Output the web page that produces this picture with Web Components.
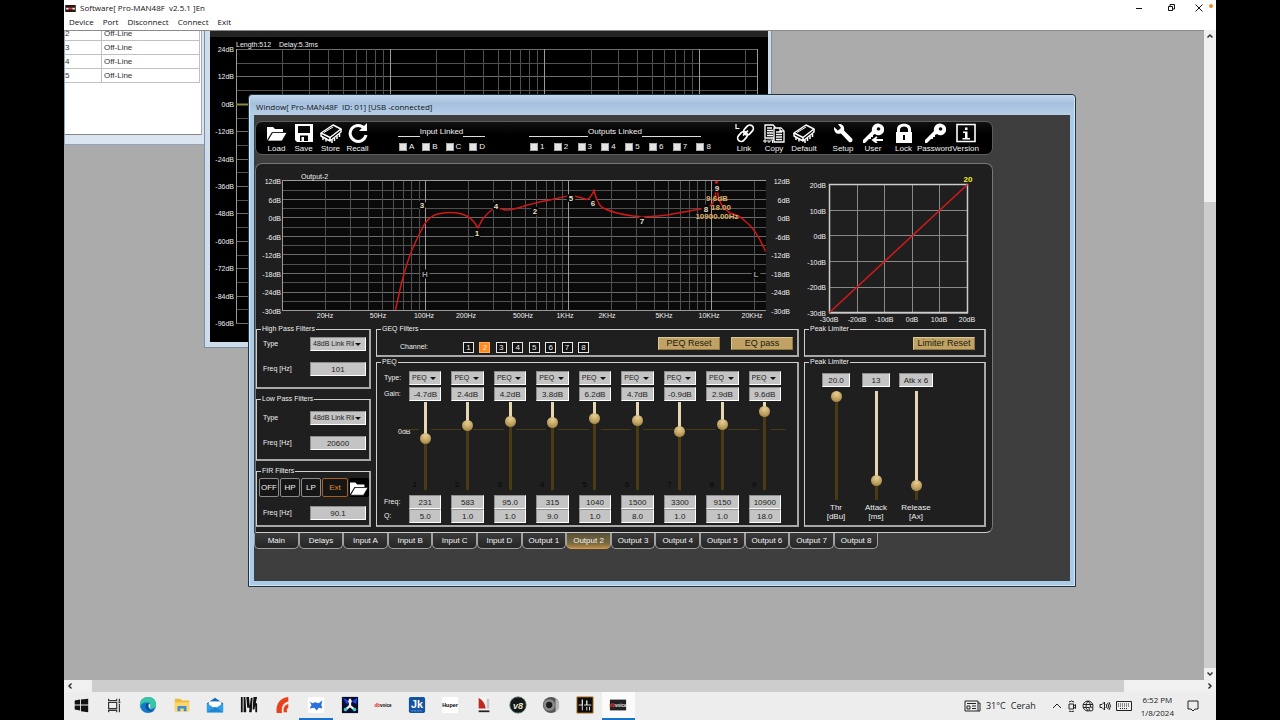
<!DOCTYPE html>
<html lang="en">
<head>
<meta charset="utf-8">
<title>Software[ Pro-MAN48F v2.5.1 ]En</title>
<style>
  html, body { margin: 0; height: 100%; background: #000; }
  body { font-family: "Liberation Sans", Arial, sans-serif; font-size: 8px; line-height: 10px; }
</style>
</head>
<body>
<pro-app></pro-app>
<script>
const define = (name, render, css) => customElements.define(name, class extends HTMLElement {
  connectedCallback() {
    if (this.shadowRoot) return;
    this.attachShadow({ mode: 'open' }).innerHTML =
      `<style>*{box-sizing:border-box}button,input,select{font:inherit;color:inherit;margin:0;padding:0;border:0;border-radius:0;background:none}${css}</style>${render(this)}`;
  }
});
const attr = (el, name, fallback = '') => el.getAttribute(name) ?? fallback;

/* ---------- icons ---------- */
const FOLDER = '<path d="M1 17V4h6l2 2h8v3H6z" fill="#fff"/><path d="M6.5 9.5H21L16 18H1.5z" fill="#fff" stroke="#000" stroke-width=".7"/>';
const CHIP = '<g fill="none" stroke="#fff" stroke-width="1.5" stroke-linejoin="round"><path d="M1 10L13 2l8 4-11 8.5z"/><path d="M1 10v3l9 5 11-9V6M10 14.5V18" /><path d="M4 9.5l9-5.5" stroke-width="1"/><path d="M3 14v3M6 15.5v3M12 17v3M14.5 15v3M17 13v3M19.5 11v3"/></g>';
const KEY = '<path fill="#fff" fill-rule="evenodd" d="M11 3a6 6 0 0 1 9-1 5.5 5.5 0 0 1-7 9l-2 1v2H9v2H7l-4 4H1v-3l9-9a6 6 0 0 1 1-5zm5.5 1.2a1.7 1.7 0 1 0 .1 0z"/>';
const ICONS = {
  load: FOLDER, store: CHIP, default: CHIP,
  save: '<path fill="#fff" fill-rule="evenodd" d="M2 1h18v18H4l-2-2zM5 3v7h12V3zM7 12.5V18h8v-5.5zM8.5 14H11v4H8.5z"/>',
  recall: '<path d="M17.5 5.5A8 8 0 1 0 19 12" fill="none" stroke="#fff" stroke-width="3"/><path d="M12 8h8V0z" fill="#fff"/>',
  link: '<g fill="none" stroke="#fff" stroke-width="1.7"><rect x="10" y="3.5" width="11" height="7" rx="3.5" transform="rotate(-48 15.5 7)"/><rect x="4" y="10" width="11" height="7" rx="3.5" transform="rotate(-48 9.5 13.5)"/><path d="M10 12.500l5-5"/><path d="M3 1v4.500H6.500" stroke-width="1.2"/></g>',
  copy: '<g fill="#000" stroke="#fff" stroke-width="1.3"><path d="M2 2h8l2 2v11H2z"/><path d="M4 5h5M4 7.5h6M4 10h6M4 12.5h6"/><path d="M11 5h7l3 3v11H11z"/><path d="M13 9h6M13 11.5h6M13 14h6M13 16.5h6M17 5v3h4"/><path d="M1 17h2v2H1zM5 16.5V19h2v-2.5M8 17h3M9.5 17v3" stroke-width="1"/></g>',
  setup: '<path fill="#fff" d="M2 4l4 3.5L9 5 6 1c4-.5 7 2 6 6.5l8 8c1.5 2-.8 4.800-3 3.500l-8-8.500C4.500 12 1.500 8.500 2 4z"/>',
  user: KEY + '<path d="M11 17h10M15 14l-4 3 4 3" fill="none" stroke="#fff" stroke-width="1.8"/>',
  password: KEY,
  lock: '<path fill="#fff" fill-rule="evenodd" d="M4 9V6c0-7 14-7 14 0v3h1v11H3V9zm3 0h8V6.5c0-4-8-4-8 0zm3 3v5h2v-5z"/>',
  version: '<path d="M2 1.5h18v17H2z" fill="none" stroke="#fff" stroke-width="1.6"/><path d="M10 4.5h2.5V7H10zM8 8.5h4.500V15H15v1.500H7.500V15H10v-5H8z" fill="#fff"/>'
};

define('tool-button', el => `<button type="button"><svg viewBox="0 0 22 20" aria-hidden="true">${ICONS[attr(el, 'icon')]}</svg><span><slot></slot></span></button>`, `
  :host{display:block;width:var(--tool-width,30px)}
  button{display:flex;flex-direction:column;align-items:center;gap:1px;width:100%;color:#f2f2f2;white-space:nowrap}
  svg{display:block;width:22px;height:20px}`);

define('link-group', el => `<fieldset><legend>${attr(el, 'caption')}</legend>
  <div class="row">${attr(el, 'items').split(' ').map(i => `<label><input type="checkbox">${i}</label>`).join('')}</div></fieldset>`, `
  :host{display:block;color:#f2f2f2}
  fieldset{border:0;margin:0;padding:0;min-width:0}
  legend{display:flex;width:var(--line-width,100%);padding:0;line-height:10px;font-size:8px;white-space:nowrap}
  legend::before,legend::after{content:"";flex:1;border-bottom:1px solid #ddd;height:9px}
  .row{display:flex;justify-content:space-between;padding:5px 0 0 1px}
  label{display:flex;align-items:center;gap:2px}
  input{appearance:none;width:8px;height:8px;background:#e4e4e4;border:1px solid #aaa}`);

/* ---------- fields ---------- */
define('group-box', el => `<fieldset><legend>${attr(el, 'caption')}</legend><slot></slot></fieldset>`, `
  :host{display:block;min-width:0;color:#eee}
  fieldset{height:100%;margin:0;padding:0;min-width:0;border:1px solid #d0d0d0;border-right:2px solid #a8a8a8;border-bottom:2px solid #a8a8a8}
  legend{margin-left:4px;padding:0 1px;font-size:7px;line-height:10px}`);

define('pick-list', el => `<select aria-label="${attr(el, 'label')}"><option>${attr(el, 'value')}</option></select>`, `
  :host{display:block;position:relative;height:14px;background:#c4c4c4;border:1px solid #eee;border-color:#8d8d8d #fff #fff #8d8d8d;color:#222}
  :host::after{content:"";position:absolute;right:4px;top:5px;border:3px solid transparent;border-top-color:#111;border-bottom:0;pointer-events:none}
  select{appearance:none;display:block;width:100%;height:12px;padding:0 11px 1px 2px;font-size:7px;overflow:hidden}`);

define('value-box', el => `<input type="text" aria-label="${attr(el, 'label')}" value="${attr(el, 'value')}">`, `
  :host{display:block;height:14px;background:#c4c4c4;border:1px solid #fff;border-color:#8d8d8d #fff #fff #8d8d8d;color:#222}
  input{display:block;width:100%;height:12px;text-align:center;font-size:8px}`);

define('filter-fields', el => `
  ${el.hasAttribute('type') ? `<span>Type</span><pick-list label="${attr(el, 'name')} type" value="${attr(el, 'type')}"></pick-list>` : ''}
  <span>Freq [Hz]</span><value-box label="${attr(el, 'name')} frequency" value="${attr(el, 'freq')}"></value-box>`, `
  :host{display:grid;grid-template-columns:47px 56px;align-items:center;row-gap:11px;padding:var(--top,3px) 0 0 6px;font-size:7px}`);

define('gold-button', () => `<button type="button"><slot></slot></button>`, `
  :host{display:block;width:62px}
  button{width:100%;height:13px;background:#bfa264;border:1px solid #d9c796;border-color:#d9c796 #8d7642 #8d7642 #d9c796;color:#1d1a10;font-size:9px;line-height:11px;white-space:nowrap}`);

define('level-fader', el => {
  const min = +attr(el, 'min', 0), max = +attr(el, 'max', 100), v = +attr(el, 'value');
  const p = 100 - (v - min) / (max - min) * 100;
  return `<input type="range" step="any" aria-label="${attr(el, 'label')}" min="${min}" max="${max}" value="${v}" style="--p:${p}%">`;
}, `
  :host{display:block;width:11px}
  input{appearance:none;display:block;writing-mode:vertical-lr;direction:rtl;width:11px;height:100%;
    background:linear-gradient(#e6d6b2 var(--p),#4b3b12 var(--p)) center/3px 100% no-repeat}
  input::-webkit-slider-runnable-track{width:11px;height:100%;background:none}
  input::-webkit-slider-thumb{appearance:none;width:11px;height:11px;border-radius:50%;background:radial-gradient(circle at 50% 25%,#e4cf97,#c4a562 50%,#8d733a)}`);

define('band-strip', el => {
  const n = attr(el, 'n'), g = attr(el, 'gain');
  return `<pick-list label="Band ${n} type" value="PEQ"></pick-list>
  <value-box class="gain" label="Band ${n} gain" value="${g}dB"></value-box>
  <div class="lane"><span class="n">${n}</span><level-fader label="Band ${n} gain" min="-30" max="12" value="${g}"></level-fader><span class="n"></span></div>
  <value-box label="Band ${n} frequency" value="${attr(el, 'freq')}"></value-box>
  <value-box label="Band ${n} Q" value="${attr(el, 'q')}"></value-box>`;
}, `
  :host{display:flex;flex-direction:column;min-width:0}
  pick-list,value-box{margin:0 5px}
  .gain{margin-top:2px}
  .lane{display:flex;justify-content:center;height:88px;margin:1px 0 5px;
    background:linear-gradient(90deg,#4b3b12 15px,#0000 15px 27px,#4b3b12 27px) 0 27px/100% 1px no-repeat}
  .lane .n{width:10px;color:#050505;align-self:flex-end;text-align:center}`);

define('limit-strip', el => `
  <value-box label="${attr(el, 'caption')}" value="${attr(el, 'text')}"></value-box>
  <level-fader label="${attr(el, 'caption')}" value="${attr(el, 'value')}"></level-fader>
  <span>${attr(el, 'caption')}<br>${attr(el, 'unit')}</span>`, `
  :host{display:flex;flex-direction:column;align-items:center;text-align:center;line-height:9px;font-size:8px}
  value-box{width:var(--box-width,28px)}
  level-fader{height:109px;margin:4px 0 3px}`);

/* ---------- graphs ---------- */
const logLines = (x0, decade, x1, y0, y1) => {
  let s = '';
  for (let d = 0; d < 4; d++) for (let k = 1; k < 10; k++) {
    const x = Math.round(x0 + decade * (d + Math.log10(k)));
    if (x < x1) s += `<path class="${k === 1 ? 'major' : ''}" d="M${x}.5 ${y0}V${y1}"/>`;
  }
  return s;
};
const rows = (n, y0, step, x0, x1) => Array.from({ length: n }, (_, i) => `<path class="${i % 2 ? '' : 'mid'}" d="M${x0} ${Math.round(y0 + i * step)}.5H${x1}"/>`).join('');
const text = (x, y, s, cls = '') => `<text class="${cls}" x="${x}" y="${y}">${s}</text>`;
const SVG_CSS = `svg{display:block;width:100%;height:auto}path{fill:none;stroke:#505050}.mid{stroke:#6c6c6c}.major{stroke:#9a9a9a}
  text{font-size:7px;fill:#eee}.end{text-anchor:end}.c{text-anchor:middle}`;

define('fir-graph', () => `<svg viewBox="210 30 558 312" role="img" aria-label="FIR response">
  <rect x="210" y="30" width="558" height="312" fill="#000"/><rect x="210" y="30" width="558" height="7" fill="#232323"/>
  ${rows(21, 49, 13.7, 236, 757)}${logLines(235.5, 154.4, 757, 49, 323)}<path class="major" d="M757.5 49V323"/>
  <path d="M236 104.5H757" style="stroke:#8c8a3c;stroke-width:2"/>
  ${text(236, 47, 'Length:512')}${text(279, 47, 'Delay:5.3ms')}
  ${[24, 12, 0, -12, -24, -36, -48, -60, -72, -84, -96].map((v, i) => text(234, Math.round(52 + i * 27.4), v + 'dB', 'end')).join('')}
</svg>`, `:host{display:block}${SVG_CSS} text.end{font-size:7px}`);

define('eq-graph', () => {
  const marks = [['3', 422, 205], ['1', 477, 233], ['4', 496, 206], ['2', 535, 211], ['5', 571, 198], ['6', 593, 203], ['7', 642, 221], ['8', 706, 209], ['9', 717, 188], ['H', 425, 274, 1], ['L', 756, 274, 1]];
  return `<svg viewBox="256 164 544 160" role="img" aria-label="Output-2 response">
  <rect x="282" y="180" width="484" height="131" fill="#0a0a0a"/>
  ${rows(15, 180.3, 9.27, 282, 766)}${logLines(282, 143.1, 766, 180, 311)}
  <path class="major" d="M282 180.5H766M282 310.5H766"/>
  <path style="stroke:#d01818;stroke-width:1.5" d="M395.5 310L401 285Q407 262 412 250 417 238 424 225 429 217 436 214.5 446 211.5 457 213 469 215 474 222L478 228 482 220Q487 213 493 209 499 207 505 210 512 210 520 207.5 533 203 550 200 563 197 571 195.5 580 197 587 199.5 590 199 594 190.5 597 203 602 207.5 612 213 633 216 647 218 667 215 690 211 706 208 714 206 715.5 195L716.5 182 718 195Q720 207 730 213 739 215 745 221 756 229 765.5 251.5"/>
  ${marks.map(([t, x, y, dim]) => `<circle cx="${x}" cy="${y}" r="4.5" fill="#080808"/>${text(x, y + 3, t, dim ? 'c dim' : 'c mark')}`).join('')}
  <circle cx="716.5" cy="182" r="1.5" fill="#e01818"/>
  ${text(717, 201, '9.6dB', 'c gold')}${text(721, 210, '18.00', 'c gold')}${text(717, 219, '10900.00Hz', 'c gold')}
  ${text(301, 179, 'Output-2', 'name')}
  ${[12, 6, 0, -6, -12, -18, -24, -30].map((v, i) => { const y = Math.round(184 + i * 18.5); return text(281, y, v + 'dB', 'end') + text(790, y, v + 'dB', 'end'); }).join('')}
  ${[[325, '20Hz'], [378, '50Hz'], [424, '100Hz'], [466, '200Hz'], [523, '500Hz'], [565, '1KHz'], [607, '2KHz'], [664, '5KHz'], [709, '10KHz'], [752, '20KHz']].map(([x, t]) => text(x, 318, t, 'c')).join('')}
</svg>`;
}, `:host{display:block}${SVG_CSS} .mark,.dim{font-size:8px;font-weight:bold;fill:#e6dfc4}.dim{fill:#999}.gold{font-size:8px;font-weight:bold;fill:#d9ad62}`);

define('limiter-graph', () => `<svg viewBox="800 164 192 160" role="img" aria-label="Limiter curve">
  ${[0, 1, 2, 3, 4, 5].map(i => `<path class="major" d="M${Math.round(829 + i * 27.6)}.5 184V313M829 ${Math.round(184 + i * 25.7)}.5H968"/>`).join('')}
  <path style="stroke:#ccc;stroke-width:1.5" d="M829.5 184.5H967.5V312.5H829.5z"/>
  <path style="stroke:#d81818;stroke-width:1.5" d="M829.5 312.5L967.5 184.5"/>
  <text class="c tip" x="968" y="182">20</text>
  ${[20, 10, 0, -10, -20, -30].map((v, i) => text(826, Math.round(188 + i * 25.6), v + 'dB', 'end')).join('')}
  ${[-30, -20, -10, 0, 10, 20].map((v, i) => text(Math.round(829 + i * 27.6), 322, v + 'dB', 'c')).join('')}
</svg>`, `:host{display:block}${SVG_CSS} .major{stroke:#888}.tip{font-size:8px;font-weight:bold;fill:#f4f021}`);

/* ---------- editor ---------- */
const BANDS = [[-4.7, '231', '5.0'], [2.4, '583', '1.0'], [4.2, '95.0', '1.0'], [3.8, '315', '9.0'], [6.2, '1040', '1.0'], [4.7, '1500', '8.0'], [-0.9, '3300', '1.0'], [2.9, '9150', '1.0'], [9.6, '10900', '18.0']];
const TABS = ['Main', 'Delays', 'Input A', 'Input B', 'Input C', 'Input D', ...[1, 2, 3, 4, 5, 6, 7, 8].map(n => 'Output ' + n)];

define('tool-strip', () => `
  <div class="tools small"><tool-button icon="load">Load</tool-button><tool-button icon="save">Save</tool-button><tool-button icon="store">Store</tool-button><tool-button icon="recall">Recall</tool-button></div>
  <link-group class="in" caption="Input Linked" items="A B C D"></link-group>
  <link-group class="out" caption="Outputs Linked" items="1 2 3 4 5 6 7 8"></link-group>
  <div class="tools"><tool-button icon="link">Link</tool-button><tool-button icon="copy">Copy</tool-button><tool-button icon="default">Default</tool-button></div>
  <div class="tools user"><tool-button icon="setup">Setup</tool-button><tool-button icon="user">User</tool-button></div>
  <div class="tools wide"><tool-button icon="lock">Lock</tool-button><tool-button icon="password">Password</tool-button><tool-button icon="version">Version</tool-button></div>`, `
  :host{display:flex;height:34px;padding:1px 8px 0 7px;background:linear-gradient(#101010,#000 40%);border:1px solid #5c5c5c;border-radius:7px}
  .tools{display:flex}.small{--tool-width:27px}.wide{--tool-width:31px}
  .in{width:87px;margin:4px 0 0 27px}
  .out{width:182px;margin:4px 18px 0 44px;--line-width:172px}
  .user{margin-left:9px}`);

define('fir-box', () => `<div class="modes"><button>OFF</button><button>HP</button><button>LP</button><button class="on">Ext</button><button class="file" aria-label="Open file"><svg viewBox="0 0 22 20">${FOLDER}</svg></button></div>
  <filter-fields name="FIR" freq="90.1"></filter-fields>`, `
  :host{display:block}
  .modes{display:flex;gap:1px;padding:2px 0 0 2px;margin-bottom:6px}
  button{width:20px;height:19px;border:1px solid #8a8a8a;border-radius:2px;background:#161616;color:#eee;font-size:8px}
  .on{width:26px;border-color:#a4601c;color:#e08828}
  .file{border:0;background:#000}
  svg{display:block;width:20px;height:18px}`);

define('channel-bar', () => `<span>Channel:</span>
  <div class="nums">${[1, 2, 3, 4, 5, 6, 7, 8].map(n => `<button ${n === 2 ? 'class="on"' : ''}>${n}</button>`).join('')}</div>
  <gold-button>PEQ Reset</gold-button><gold-button>EQ pass</gold-button>`, `
  :host{display:flex;align-items:flex-start;padding:3px 4px 0 23px;font-size:7px}
  span{width:63px;margin-top:5px}
  .nums{display:flex;justify-content:space-between;width:126px;margin:5px auto 0 0}
  .nums button{width:11px;height:11px;border:1px solid #e8e8e8;background:#111;color:#eee;line-height:9px;font-size:8px}
  .nums .on{background:#ff8a1c;border-color:#ffb060}
  gold-button+gold-button{margin-left:11px}`);

define('peq-bank', () => `<div class="labels"><span>Type:</span><span>Gain:</span><span class="zero">0dB</span><span>Freq:</span><span>Q:</span></div>
  ${BANDS.map(([g, f, q], i) => `<band-strip n="${i + 1}" gain="${g}" freq="${f}" q="${q}"></band-strip>`).join('')}`, `
  :host{display:grid;grid-template-columns:27px repeat(9,1fr);padding:4px 11px 0 0}
  .labels{display:grid;grid-template-rows:14px 18px 58px 48px 14px;align-items:center;min-width:0;padding-left:7px;font-size:7px;white-space:nowrap}
  .labels .zero{padding-left:14px}
  .labels span:nth-child(4){align-self:end;padding-bottom:2px}`);

define('output-panel', () => `
  <div class="graphs"><eq-graph></eq-graph><limiter-graph></limiter-graph></div>
  <div class="groups">
    <div class="col left">
      <group-box caption="High Pass Filters"><filter-fields name="High pass" type="48dB Link Rik" freq="101"></filter-fields></group-box>
      <group-box class="lp" caption="Low Pass Filters"><filter-fields name="Low pass" type="48dB Link Rik" freq="20600"></filter-fields></group-box>
      <group-box caption="FIR Filters"><fir-box></fir-box></group-box>
    </div>
    <div class="col"><group-box caption="GEQ Filters"><channel-bar></channel-bar></group-box><group-box caption="PEQ"><peq-bank></peq-bank></group-box></div>
    <div class="col"><group-box caption="Peak Limiter"><div class="reset"><gold-button>Limiter Reset</gold-button></div></group-box>
      <group-box caption="Peak Limiter"><div class="limits">
        <limit-strip caption="Thr" unit="[dBu]" text="20.0" value="100"></limit-strip>
        <limit-strip caption="Attack" unit="[ms]" text="13" value="14"></limit-strip>
        <limit-strip class="wide" caption="Release" unit="[Ax]" text="Atk x 6" value="9"></limit-strip>
      </div></group-box></div>
  </div>`, `
  :host{display:block;background:#1f1f1f;border:1px solid #777;border-bottom-color:#ccc;border-radius:7px 7px 7px 0;padding-bottom:5px}
  .graphs{display:grid;grid-template-columns:544fr 192fr}
  .groups{display:grid;grid-template-columns:minmax(0,115fr) minmax(0,423fr) minmax(0,182fr);column-gap:5px;padding-right:6px}
  .col{display:grid;grid-template-columns:minmax(0,1fr);grid-template-rows:33px 170px}
  .left{grid-template-rows:65px 67px 61px;row-gap:5px}
  .lp{--top:7px}
  .reset{display:flex;justify-content:flex-end;padding:3px 9px 0 0}
  .limits{display:grid;grid-template-columns:repeat(3,40px);padding:6px 0 0 11px}
  .wide{--box-width:34px}`);

define('page-tabs', () => `<nav>${TABS.map(t => `<button ${t === 'Output 2' ? 'class="on" aria-current="page"' : ''}>${t}</button>`).join('')}</nav>`, `
  :host{display:block}
  nav{display:grid;grid-template-columns:repeat(14,1fr);width:84.5%}
  button{height:16px;color:#f2f2f2;background:linear-gradient(#3a3a3a,#262626);border:1px solid #a0a0a0;border-top:0;border-radius:0 0 5px 5px;font-size:8px;white-space:nowrap}
  .on{background:linear-gradient(#565038,#7a6a40 70%,#b98843);border-bottom-color:#d39a50}`);

define('device-editor', () => `<tool-strip></tool-strip><output-panel></output-panel><page-tabs></page-tabs>`, `
  :host{display:flex;flex-direction:column;height:100%;padding:6px 77px 0 1px;background:#3e3e3e}
  output-panel{margin-top:8px}
  page-tabs{margin-left:-1px}`);

/* ---------- windows ---------- */
define('mdi-window', el => `${el.hasAttribute('caption') ? `<header>${attr(el, 'caption')}</header>` : ''}<div class="client"><slot></slot></div>`, `
  :host{display:flex;flex-direction:column;position:absolute;background:#a9cde8;border:1px solid #20343f;border-radius:4px 4px 0 0;padding:0 5px 5px;box-shadow:inset 0 0 0 1px #d4e6f5}
  header{height:20px;margin:0 -4px;padding:0 2px 0 6px;line-height:24px;background:linear-gradient(#c4d6ea,#a5c0de 40%,#b6cfe8);white-space:pre;color:#111;font-family:"Open Sans",sans-serif;font-size:8px;border-radius:3px 3px 0 0}
  .client{flex:1;min-height:0;overflow:hidden}`);

define('device-list', () => `<table>${[2, 3, 4, 5].map(n => `<tr><td>${n}</td><td>Off-Line</td></tr>`).join('')}</table>`, `
  :host{display:block;height:100%;background:#fff;border-right:1px solid #aaa;border-bottom:1px solid #888;overflow:hidden}
  table{border-spacing:0;width:135px;margin-top:-3px;table-layout:fixed;color:#333}
  td{height:14px;padding:0 0 0 2px;border-right:1px solid #c0c0c0;border-bottom:1px solid #c0c0c0;line-height:13px}
  td:first-child{width:37px;padding-left:0}`);

/* ---------- shell ---------- */
define('app-header', () => `
  <div class="bar"><svg class="logo" viewBox="0 0 12 8"><path d="M0 0h12v8H0z" fill="#2a1414"/><path d="M1 4h3M8 4h3" stroke="#eee" stroke-width="2"/><path d="M4 4h4" stroke="#d33" stroke-width="2"/></svg><span>Software[ Pro-MAN48F&nbsp; v2.5.1 ]En</span>
    <div class="ctl"><button aria-label="Minimize"><svg viewBox="0 0 10 10"><path d="M2 5.5h6"/></svg></button><button aria-label="Restore"><svg viewBox="0 0 10 10"><path d="M2.5 3.5h4v4h-4zM4 3V1.5h4.500V6H7"/></svg></button><button aria-label="Close"><svg viewBox="0 0 10 10"><path d="M1.5 1.5l7 7M8.5 1.5l-7 7"/></svg></button></div><i></i></div>
  <nav>${['Device', 'Port', 'Disconnect', 'Connect', 'Exit'].map(m => `<button>${m}</button>`).join('')}</nav>`, `
  :host{display:block;height:30px;background:#fff;color:#111;font-family:"Open Sans",sans-serif;font-size:8px}
  .bar{display:flex;align-items:center;height:16px;gap:4px}
  .logo{width:11px;height:7px;margin-left:1px}
  .ctl{display:flex;margin-left:auto}
  .ctl button{width:31px;height:14px;display:grid;place-items:center}
  .ctl svg{width:10px;height:10px;fill:none;stroke:#111}
  .ctl button:first-child{width:33px}
  .ctl button:last-child{width:25px}
  i{width:4px;height:4px;border-radius:50%;background:#f08a24;margin:-4px 3px 0 -6px}
  nav{display:flex;gap:9px;padding-left:5px}
  nav button{line-height:12px}`);

define('scroll-track', () => `<button aria-label="Scroll back"><svg viewBox="0 0 10 10"><path d="M6.5 2.5L4 5l2.5 2.5"/></svg></button><div class="pre"></div><div class="thumb"></div><div class="post"></div><button aria-label="Scroll forward"><svg viewBox="0 0 10 10"><path d="M3.5 2.5L6 5 3.5 7.5"/></svg></button>`, `
  :host{display:flex;background:#f0f0f0}
  :host([vertical]){flex-direction:column}
  button{display:grid;place-items:center;width:12px;height:12px}
  svg{width:10px;height:10px;fill:none;stroke:#333;stroke-width:1.5}
  :host([vertical]) svg{transform:rotate(90deg)}
  .thumb{flex:1;background:#cdcdcd}
  .pre{flex:0 0 var(--pre)}.post{flex:0 0 var(--post)}`);

const APPS = [
  ['Start', '<path d="M3 5l6-1v5.5H3zM10 4l8-1v6.5h-8zM3 10.5h6V16l-6-1zM10 10.5h8V18l-8-1z" fill="#111"/>'],
  ['Task view', '<path d="M4 7h9v7H4zM4 3v2h9V3M4 18v-2h9v2M16 3v3M16 9v9" fill="none" stroke="#333" stroke-width="1.3"/><path d="M15 6h2v2h-2z" fill="#333"/>'],
  ['Edge', '<circle cx="10" cy="10" r="9" fill="#1478c8"/><path d="M1 10C1 4 5 1 10 1c6 0 9 4 9 8 0 3-2 5-5 5-3 0-3-2-2-3 1-3-1-4-3-4-4 0-7 2-8 5z" fill="#39c6a8"/><path d="M8 9c-2 3 0 7 4 8 2 .5 4 0 5-1-3 1-7-1-6-4-1-1 0-3 1-3-1-1-3-1-4 0z" fill="#0b4f95"/><path d="M11 9c2 0 2 2 1 3 0 2 3 3 6 1l1-3c0 3-3 5-6 4-2 0-3-3-2-5z" fill="#eee"/>'],
  ['File Explorer', '<path d="M2 3h6l2 2h8v12H2z" fill="#f0b73a"/><path d="M2 7h16v10H2z" fill="#fbd66e"/><path d="M5 17v-6h10v6h-3v-3H8v3z" fill="#3d8fd1"/>'],
  ['Mail', '<path d="M1 8l9-6 9 6v10H1z" fill="#1669b2"/><path d="M3 6h14v7H3z" fill="#fff"/><path d="M1 8l9 6 9-6v10H1z" fill="#2f9fe8"/><path d="M1 18l9-6 9 6z" fill="#1f86d2"/>'],
  ['MW', '<path d="M1 1h18v18H1z" fill="#f4f4f4"/><path d="M1 1h2v17H1zM4 1h2l1 17H4zM7 1h3l1 12H8zM12 2h2l-1 16h-3zM15 1h4l-3 14h-2zM17 8h2v10h-2z" fill="#111"/>'],
  ['Signal', '<path d="M4 19C3 8 8 2 17 1v5c-5 1-8 5-7 13z" fill="#e6431c"/><path d="M12 18c-1-5 1-8 5-9v4c-2 1-2 3-1 5z" fill="#e6431c"/>'],
  ['Paw', '<rect x="1" y="1" width="18" height="18" rx="2" fill="#fff"/><path d="M3 6l3 2 3-1 4 1 4-3-1 5 1 4-4-1-2 3-3-3-5 1 2-4z" fill="#2b6fe0"/>', 'run'],
  ['Trio', '<path d="M1 1h18v18H1z" fill="#0a0d30"/><path d="M2 2l6 3-1 5zM18 2l-6 4 5 3z" fill="#1a4af0"/><path d="M10 3v8M10 11l-6 5M10 11l6 5" stroke="#f4f4f4" stroke-width="2.5"/><circle cx="5" cy="15" r="2" fill="#37d2c0"/><circle cx="15" cy="15" r="2" fill="#37d2c0"/><circle cx="10" cy="6" r="2" fill="#e8f0ff"/>'],
  ['dbvoice', '<text x="10" y="12" font-size="5" font-weight="bold" text-anchor="middle"><tspan fill="#d22">db</tspan>voice</text>'],
  ['Jk', '<rect x="1" y="1" width="18" height="18" rx="2" fill="#1552a0"/><text x="10" y="13" font-size="12" font-weight="bold" text-anchor="middle" fill="#fff">Jk</text><path d="M4 16.5h12" stroke="#6fb4f0" stroke-dasharray="2 1"/>'],
  ['Huper', '<path d="M1 1h18v18H1z" fill="#fff"/><text x="10" y="12" font-size="6" font-weight="bold" text-anchor="middle">Huper</text>'],
  ['N', '<path d="M3 1h14v18H3z" fill="#f4f4f4"/><path d="M4 14V2c4 2 7 6 8 12z" fill="#c02820"/><path d="M13 3h3v11h-3z" fill="#c8c8c8"/><path d="M4 17h12" stroke="#222" stroke-width="2"/>'],
  ['v8', '<circle cx="10" cy="10" r="9" fill="#14181a" stroke="#4b6b5c"/><text x="10" y="14" font-size="10" font-weight="bold" font-style="italic" text-anchor="middle" fill="#e8e4c8">v8</text>'],
  ['Speaker', '<circle cx="10" cy="10" r="9" fill="#555"/><circle cx="8" cy="10" r="6.5" fill="#8a8a8a"/><circle cx="8" cy="10" r="3.5" fill="#1c1c1c"/><path d="M15 3l4 3v8l-4 4z" fill="#b8b8b8"/>'],
  ['Live', '<path d="M1 1h18v18H1z" fill="#0c0c0c" stroke="#c8862a"/><path d="M3 10h4V4v12M9 10h3V5v5h5M12 12v4M15 12v4" stroke="#eee" fill="none"/>'],
  ['dbvoice', '<path d="M1 4h18v12H1z" fill="#222"/><text x="10" y="12" font-size="5" font-weight="bold" text-anchor="middle" fill="#eee"><tspan fill="#e33">db</tspan>voice</text>', 'run active']
];
define('task-bar', () => `
  <div class="apps">${APPS.map(([n, s, c = '']) => `<button class="${c}" aria-label="${n}"><svg viewBox="0 0 20 20">${s}</svg></button>`).join('')}</div>
  <button class="weather"><svg width="17" height="12" viewBox="0 0 17 12"><path d="M1 1h13v10H1zM14 3h2v8h-2M3 3.5h9M8 6h4M8 8.5h4M3 6h3v3H3z"/></svg><span>31°C</span><span>Cerah</span></button>
  <div class="tray">
    <svg width="10" height="12" viewBox="0 0 10 12"><path d="M1 8l4-4 4 4"/></svg>
    <svg width="10" height="12" viewBox="0 0 10 12"><path d="M2 4h4.5v5H2zM6.5 6l2-1.5v4l-2-1.5M2 2q2.5-2 5 0M2 11q2.5 1.500 5 0"/></svg>
    <svg width="12" height="12" viewBox="0 0 12 12"><circle cx="6" cy="6" r="5"/><path d="M1 4.5h10M1 7.5h6M6 1Q2 6 6 11M6 1q3 2.500 2.500 6"/><circle cx="9" cy="9" r="2" fill="#eee"/></svg>
    <svg width="12" height="12" viewBox="0 0 12 12"><path d="M1 4.5h2l2.500-2.500v8L3 7.500H1zM7 4q1.500 2 0 4M8.500 3q2.500 3 0 6M10 2q3 4 0 8"/></svg>
    <svg width="16" height="12" viewBox="0 0 16 12"><path d="M.5 1.5h15v9H.5z"/><path d="M2 4h12M2 6h12M4 8.5h8" stroke-dasharray="1 1"/></svg>
  </div>
  <time>6:52 PM<br>1/8/2024</time>
  <button class="note" aria-label="Notifications"><svg width="12" height="12" viewBox="0 0 12 12"><path d="M1 1h10v8H8l-2 2-2-2H1z"/></svg></button>`, `
  :host{display:flex;align-items:center;height:28px;background:#ededed;color:#222;font-family:"Open Sans",sans-serif;font-size:8px}
  .apps{display:flex;height:100%;flex:0 0 571px}
  .apps button{flex:1;display:grid;place-items:center;border-bottom:2px solid transparent}
  .apps svg{width:18px;height:18px;font-family:"Liberation Sans",sans-serif}
  .apps .run{border-color:#1a73c8}.apps .active{background:#fbfbfb}
  .weather,.tray{display:flex;align-items:center}
  .weather{margin-left:auto;gap:5px;font-size:9px}
  .tray{gap:5px;margin-left:16px}
  .weather svg,.tray svg,.note svg{display:block;fill:none;stroke:#222}
  time{text-align:center;line-height:13px;margin:0 0 0 9px;font-size:8px}
  .note{margin:0 17px 0 13px}`);

define('pro-app', () => `
  <app-header></app-header>
  <main>
    <section>
      <mdi-window class="devices"><device-list></device-list></mdi-window>
      <mdi-window class="fir"><fir-graph></fir-graph></mdi-window>
      <mdi-window class="editor" caption="Window[ Pro-MAN48F  ID: 01] [USB -connected]"><device-editor></device-editor></mdi-window>
    </section>
    <scroll-track vertical class="v"></scroll-track>
  </main>
  <scroll-track class="h"></scroll-track>
  <task-bar></task-bar>`, `
  :host{display:flex;flex-direction:column;height:100vh;margin:0 64px;background:#ededed;overflow:hidden}
  main{flex:1;min-height:0;display:flex}
  section{flex:1;position:relative;overflow:hidden;background:#ababab;border-top:1px solid #8a8a8a}
  .devices{left:0;top:-1px;width:141px;height:115px;background:#dbe5f1;padding:0 2px 9px 0;border-width:0 1px 1px;border-color:#8fa6bd;border-radius:0;box-shadow:none}
  .fir{left:140px;top:-1px;width:568px;height:318px;padding-right:3px;border-top:0;border-radius:0;border-color:#7c8fa0;background:#cfdcec;box-shadow:none}
  .editor{left:184px;top:63px;width:828px;height:493px}
  .v{width:12px;--pre:160px;--post:0px}
  .h{height:12px;--pre:16px;--post:80px}`);
</script>
</body>
</html>
